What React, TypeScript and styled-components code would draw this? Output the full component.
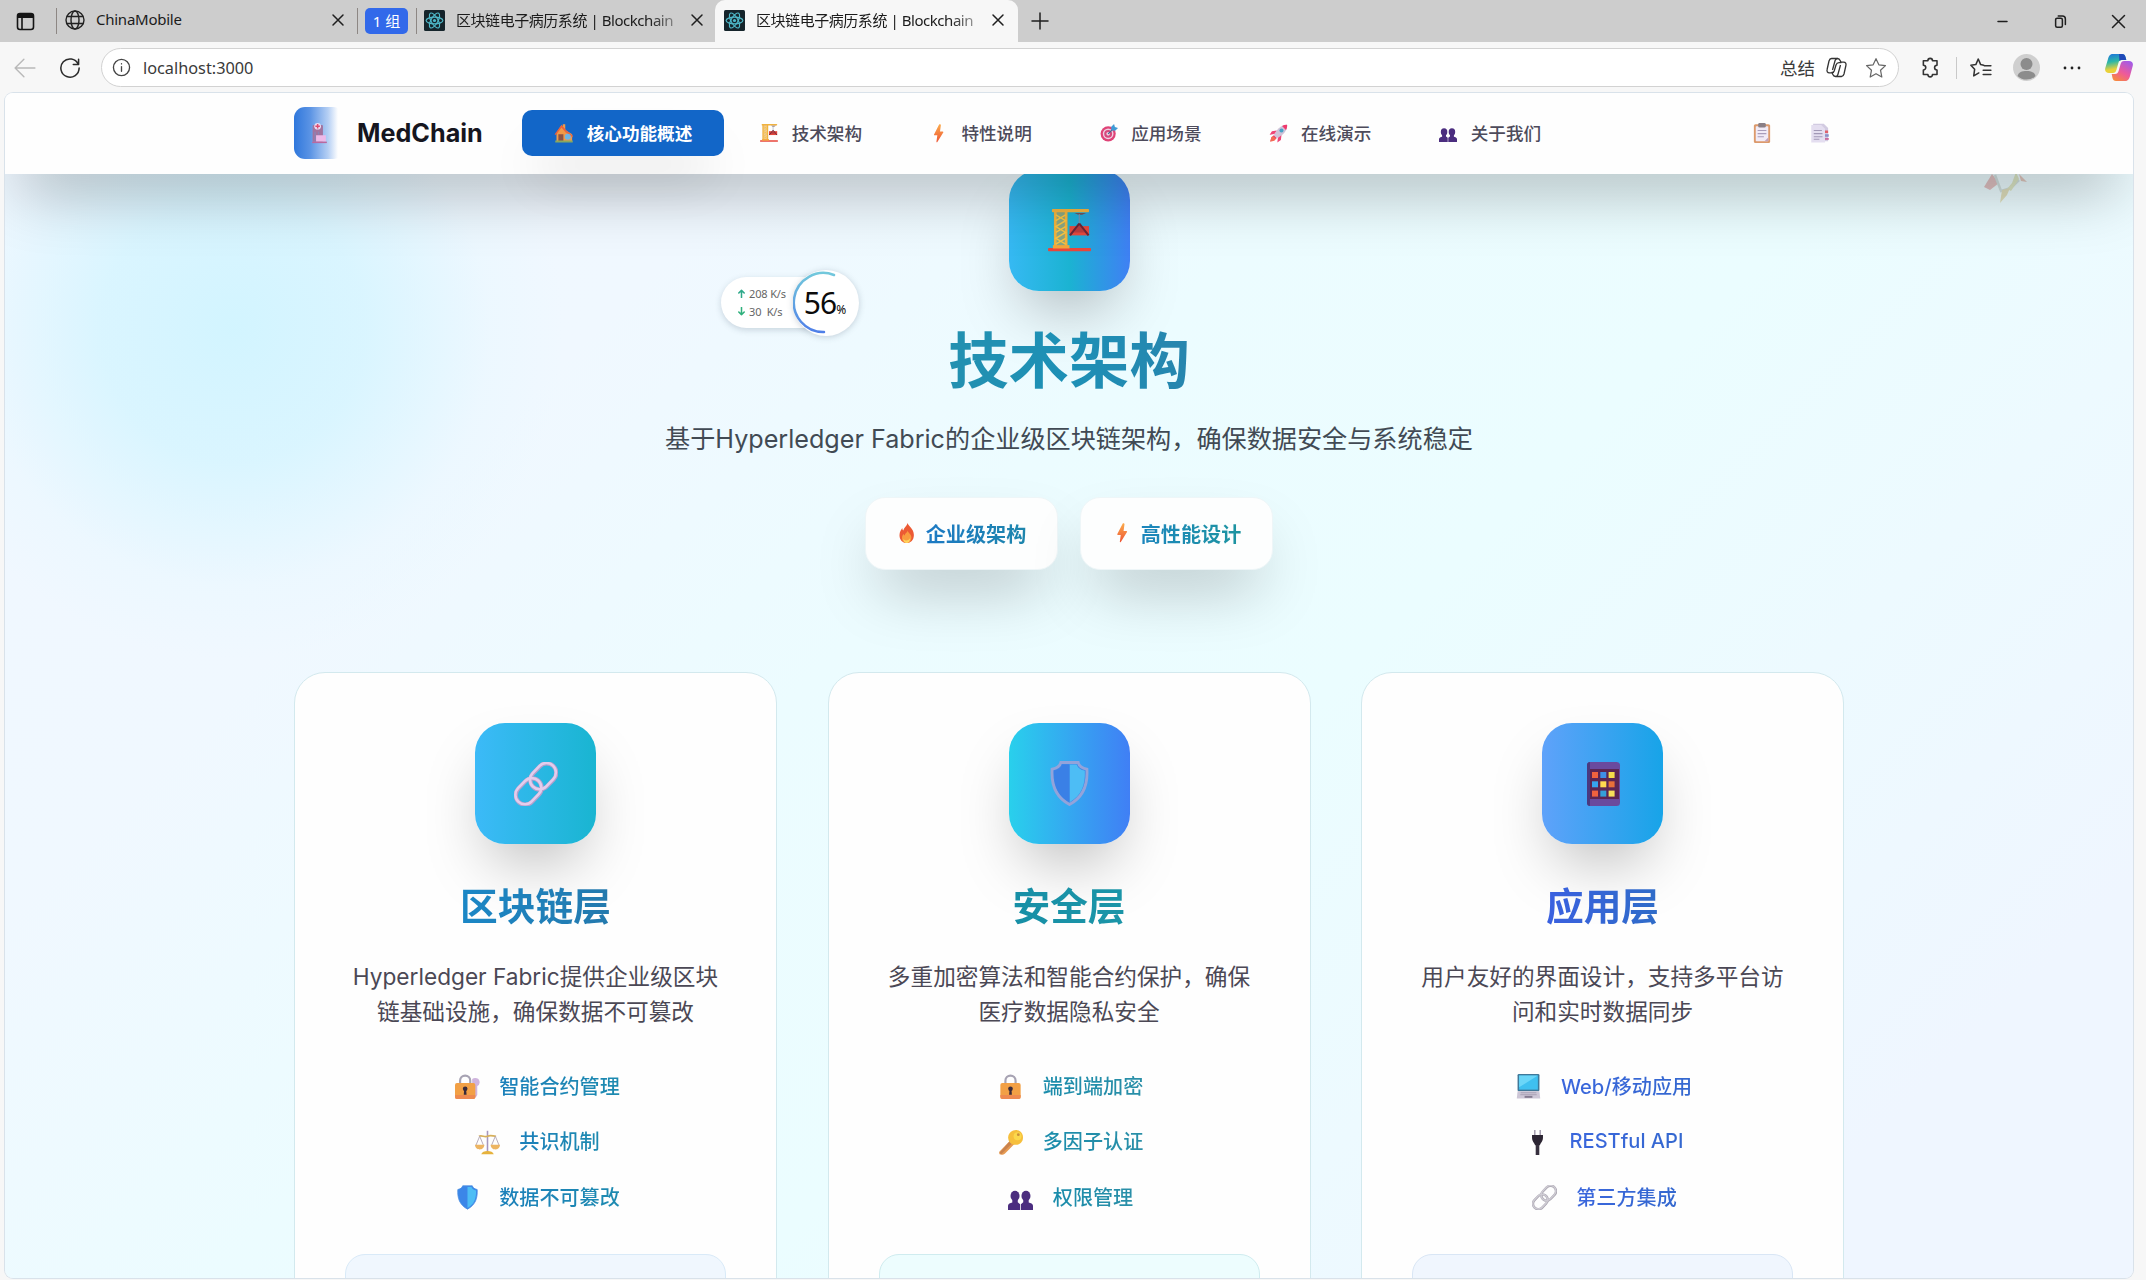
import React from 'react';
import styled, { createGlobalStyle } from 'styled-components';

const GlobalStyle = createGlobalStyle`
  * { box-sizing: border-box; }
  html, body { margin: 0; padding: 0; overflow: hidden; }
  body { font-family: Inter, "Noto Sans CJK SC", sans-serif; }
  svg { display: block; flex: none; }
`;

/* ---------- browser chrome ---------- */

const Browser = styled.div`
  width: 2146px;
  height: 1280px;
  display: flex;
  flex-direction: column;
  background: #f7f7f7;
  position: relative;
  overflow: hidden;
  font-family: Inter, "Noto Sans CJK SC", sans-serif;
`;

const TabStrip = styled.div`
  height: 42px;
  flex: none;
  display: flex;
  align-items: center;
  background: #cdcdcd;
  font-family: "Noto Sans", "Noto Sans CJK SC", sans-serif;
  font-size: 15px;
  color: #1b1b1b;
`;

const TabMenu = styled.div`
  width: 56px;
  padding-left: 16px;
`;

const Divider = styled.i<{ $h?: number; $c?: string }>`
  flex: none;
  width: 1px;
  height: ${(p) => p.$h ?? 26}px;
  background: ${(p) => p.$c ?? '#8d8784'};
`;

const Tab = styled.div<{ $w: number; $pl: number; $pr: number; $active?: boolean }>`
  width: ${(p) => p.$w}px;
  height: 42px;
  flex: none;
  display: flex;
  align-items: center;
  padding: 0 ${(p) => p.$pr}px 2px ${(p) => p.$pl}px;
  background: ${(p) => (p.$active ? '#f7f7f7' : 'transparent')};
  border-radius: 10px 10px 0 0;
`;

const TabTitle = styled.span<{ $fade?: boolean }>`
  flex: 1;
  margin: 0 4px 0 11px;
  padding-bottom: 2px;
  white-space: nowrap;
  letter-spacing: ${(p) => (p.$fade ? '-0.45px' : '-0.25px')};
  ${(p) => p.$fade && 'mask-image: linear-gradient(90deg, #000 85%, rgba(0, 0, 0, 0.25) 99%);'}
`;

const GroupBadge = styled.span`
  width: 43px;
  height: 26px;
  margin: 0 8px 0 7px;
  border-radius: 5px;
  background: #3269ea;
  color: #fff;
  display: flex;
  align-items: center;
  justify-content: center;
  padding-bottom: 1px;
  white-space: pre;
`;

const NewTab = styled.div`
  margin-left: 12px;
`;

const WindowControls = styled.div`
  margin-left: auto;
  margin-right: 20px;
  display: flex;
  gap: 43px;
`;

const Toolbar = styled.div`
  height: 51px;
  flex: none;
  display: flex;
  align-items: center;
  padding: 0 12px 0 14px;
  font-family: "Noto Sans", "Noto Sans CJK SC", sans-serif;
`;

const NavButtons = styled.div`
  display: flex;
  gap: 23px;
  width: 87px;
`;

const AddressBar = styled.div`
  width: 1798px;
  height: 39px;
  border: 1px solid #d2d2d2;
  border-radius: 20px;
  background: #fff;
  display: flex;
  align-items: center;
  padding: 0 11px 0 10px;
  font-size: 16.3px;
  color: #3a3a3a;
`;

const Url = styled.span`
  flex: 1;
  margin-left: 12px;
`;

const Summarize = styled.span`
  font-size: 17.5px;
  margin-right: 11px;
`;

const AddressTools = styled.div`
  display: flex;
  align-items: center;
  gap: 18px;
`;

const ToolbarActions = styled.div`
  flex: 1;
  display: grid;
  grid-template-columns: 36px 14px 43px 50px 42px 28px;
  align-items: center;
  padding-left: 21px;
`;

/* ---------- page ---------- */

const Viewport = styled.div`
  flex: 1;
  margin: 0 13px 2px 5px;
  overflow: hidden;
  border-radius: 8px;
  box-shadow: 0 0 0 1px #d9e2ea;
  background:
    radial-gradient(circle 330px at 228px 236px, rgba(205, 244, 255, 0.85) 0%, rgba(208, 244, 255, 0.7) 40%, rgba(226, 247, 255, 0.25) 78%, rgba(236, 249, 255, 0) 100%),
    linear-gradient(135deg, #f0f7ff 0%, #f0f8ff 25%, #ecfcff 42%, #ebfdff 58%, #edfaff 72%, #eff6ff 88%, #eff6ff 100%);
`;

const Header = styled.header`
  position: relative;
  z-index: 2;
  height: 81px;
  background: #fefefe;
  box-shadow: 0 31px 63px -15px rgba(0, 0, 0, 0.29);
`;

const Container = styled.div`
  width: 1550px;
  margin: 0 auto;
`;

const HeaderRow = styled(Container)`
  height: 80px;
  display: flex;
  align-items: center;
`;

const LogoBox = styled.div`
  width: 50px;
  height: 52px;
  border-radius: 11px;
  display: flex;
  align-items: center;
  justify-content: center;
  background: linear-gradient(90deg, #2f77dc 0%, #5a93e4 32%, #b5cff4 68%, rgba(255, 255, 255, 0) 88%);
`;

const Brand = styled.span`
  width: 165px;
  padding-left: 13px;
  font-size: 25.2px;
  font-weight: 700;
  color: #16161f;
`;

const Nav = styled.nav`
  display: flex;
  gap: 3px;
  margin-left: 13px;
`;

const NavItem = styled.a<{ $active?: boolean }>`
  height: 46px;
  display: flex;
  align-items: center;
  gap: 12px;
  padding: 0 31.7px 2px;
  border-radius: 10px;
  font-size: 17.6px;
  font-weight: ${(p) => (p.$active ? 600 : 500)};
  color: ${(p) => (p.$active ? '#fff' : '#4d4b5b')};
  background: ${(p) => (p.$active ? '#1266c8' : 'transparent')};
  box-shadow: ${(p) => (p.$active ? '0 31px 50px -15px rgba(0, 0, 0, 0.18)' : 'none')};
  white-space: nowrap;
`;

const NavIcon = styled.span`
  width: 21px;
  padding-top: 2px;
  display: flex;
  justify-content: center;
`;

const HeaderTools = styled.div`
  margin-left: auto;
  display: flex;
  gap: 10px;
`;

const ToolButton = styled.div`
  width: 48px;
  height: 48px;
  display: flex;
  align-items: center;
  justify-content: center;
`;

const Hero = styled.section`
  display: flex;
  flex-direction: column;
  align-items: center;
  margin-top: -4px;
`;

const IconTile = styled.div<{ $bg: string }>`
  width: 121px;
  height: 121px;
  flex: none;
  border-radius: 30px;
  display: flex;
  align-items: center;
  justify-content: center;
  background: ${(p) => p.$bg};
  box-shadow: 0 31px 63px -15px rgba(0, 0, 0, 0.27);
`;

const HeroTitle = styled.h2`
  margin: 32px 0 0;
  font-size: 60.4px;
  line-height: 76px;
  font-weight: 700;
  color: transparent;
  background: linear-gradient(90deg, #2390b0, #1d90b6 50%, #2785ae);
  background-clip: text;
  -webkit-background-clip: text;
`;

const HeroText = styled.p`
  margin: 20px 0 0;
  font-size: 25.15px;
  line-height: 40px;
  color: #414a54;
  white-space: nowrap;
`;

const Badges = styled.div`
  display: flex;
  gap: 22px;
  margin-top: 38px;
`;

const Badge = styled.div`
  width: 193px;
  height: 73px;
  padding-bottom: 1px;
  border-radius: 20px;
  border: 1px solid #eef6f8;
  background: #fdfefe;
  box-shadow: 0 31px 63px -15px rgba(0, 0, 0, 0.26);
  display: flex;
  align-items: center;
  justify-content: center;
  gap: 9px;
  font-size: 20.1px;
  font-weight: 600;
`;

const Gradient = styled.span<{ $g: string }>`
  color: transparent;
  background: linear-gradient(90deg, ${(p) => p.$g});
  background-clip: text;
  -webkit-background-clip: text;
`;

const Cards = styled.div`
  display: grid;
  grid-template-columns: repeat(3, 483px);
  justify-content: space-between;
  margin-top: 102px;
`;

const Card = styled.article`
  height: 720px;
  padding: 50px 50px;
  border: 1px solid #d3e9ee;
  border-radius: 31px;
  background: #fefefe;
  display: flex;
  flex-direction: column;
  align-items: center;
`;

const CardTitle = styled.h3`
  margin: 37px 0 0;
  font-size: 37.7px;
  line-height: 50px;
  font-weight: 700;
`;

const CardText = styled.p`
  margin: 28px 0 39px;
  font-size: 22.65px;
  line-height: 35.2px;
  color: #4b4855;
  text-align: center;
  white-space: nowrap;
`;

const Feature = styled.div`
  height: 34px;
  flex: none;
  margin-bottom: 21.3px;
  display: flex;
  align-items: center;
  gap: 16px;
  font-size: 20.1px;
  font-weight: 500;
`;

const FeatureIcon = styled.span`
  width: 32px;
  padding-top: 3px;
  display: flex;
  justify-content: center;
`;

const CardPanel = styled.div<{ $bg: string; $line: string }>`
  align-self: stretch;
  flex: none;
  height: 120px;
  margin-top: 20px;
  border: 1px solid ${(p) => p.$line};
  border-radius: 20px;
  background: ${(p) => p.$bg};
`;

/* ---------- floating decorations ---------- */

const Drifter = styled.div`
  position: absolute;
  left: 1983px;
  top: 162px;
  opacity: 0.4;
`;

const Monitor = styled.div`
  position: absolute;
  z-index: 3;
  left: 721px;
  top: 269px;
  width: 139px;
  height: 67px;
  display: flex;
  align-items: center;
  font-family: "Noto Sans", sans-serif;
`;

const Speeds = styled.div`
  width: 90px;
  height: 51px;
  padding-left: 16px;
  border-radius: 26px 0 0 26px;
  background: #fff;
  box-shadow: 0 2px 6px rgba(60, 80, 100, 0.22);
  display: flex;
  flex-direction: column;
  justify-content: center;
  gap: 2px;
  color: #666;
  font-size: 11px;
  letter-spacing: -0.15px;
  line-height: 16px;
`;

const Speed = styled.span`
  display: flex;
  align-items: center;
  gap: 3px;
  white-space: pre;
`;

const Gauge = styled.div`
  position: relative;
  width: 66px;
  height: 66px;
  flex: none;
  margin-left: -18px;
  border-radius: 50%;
  background: #fff;
  box-shadow: 0 1px 6px rgba(60, 80, 100, 0.25);
  display: flex;
  align-items: baseline;
  justify-content: center;
  padding-right: 3px;
  line-height: 65px;
  font-size: 30px;
  letter-spacing: -1px;
  color: #0b0b0b;
`;

const GaugeRing = styled.svg`
  position: absolute;
  inset: 0;
`;

const Percent = styled.small`
  font-size: 12px;
`;

/* ---------- icons ---------- */

type Size = { s: number };

const Crane = ({ s }: Size) => (
  <svg width={s} height={s} viewBox="0 0 44 44" fill="none">
    <rect x="0" y="40" width="44" height="3.2" rx="1" fill="#e8473c" />
    <rect x="6" y="2" width="14" height="38" fill="#e39a3c" opacity=".55" />
    <path d="M7.5 2v38M18.5 2v38" stroke="#f2b33c" strokeWidth="2.6" />
    <path d="M8 6l10 6-10 6 10 6-10 6 10 6M8 12l10-6M8 24l10-6M8 36l10-6" stroke="#f6c443" strokeWidth="1.5" />
    <rect x="4" y="0" width="38" height="3.4" rx="1" fill="#f0b23f" />
    <rect x="5" y="37" width="17" height="3.4" fill="#f5a63a" />
    <path d="M27 4h12l-4 2h-4z" fill="#70535b" />
    <path d="M32 5v10" stroke="#7e8fa8" strokeWidth="1.2" />
    <rect x="22" y="17.5" width="20" height="9.5" fill="#e5483d" />
    <path d="M32 15l-9.5 12M32 15l9.5 12" stroke="#6a2638" strokeWidth="2.2" />
    <path d="M32 16l6 8H26z" fill="#8e3040" opacity=".5" />
  </svg>
);

const Hospital = ({ s }: Size) => (
  <svg width={s} height={s * 1.35} viewBox="0 0 16 22">
    <rect x="1.500" y="3" width="10.500" height="17" rx="1" fill="#a2739f" />
    <path d="M4 10v9M7.500 10v3" stroke="#8a83b5" strokeWidth="1.400" />
    <rect x="5" y="13.500" width="10" height="6.500" fill="#edb9e8" />
    <circle cx="6.600" cy="4.300" r="3.400" fill="#eadcf2" />
    <path d="M6.600 2v4.600M4.300 4.300h4.600" stroke="#de4a70" strokeWidth="1.500" />
    <rect x="1" y="20" width="15" height="1.500" fill="#b9689f" />
  </svg>
);

const House = ({ s }: Size) => (
  <svg width={s} height={s} viewBox="0 0 32 32">
    <path d="M4 15L12 3l2 3V2h4v9l11 7v11H4z" fill="#f09a48" />
    <path d="M1 18L12 3l8 9-2 2-6-7-9 12z" fill="#e8603f" />
    <path d="M17 14l3-2 10 8v3l-8-6z" fill="#e9663e" />
    <rect x="7" y="18" width="8" height="11" fill="#8b5345" />
    <circle cx="22" cy="22" r="4.800" fill="#6db6e6" />
    <path d="M2 28h28v3H2z" fill="#88a860" />
  </svg>
);

const Bolt = ({ s }: Size) => (
  <svg width={s} height={s} viewBox="0 0 32 32">
    <defs>
      <linearGradient id="bolt" x1="0" y1="0" x2="0" y2="1">
        <stop offset="0" stopColor="#fbac4c" />
        <stop offset="1" stopColor="#ee5535" />
      </linearGradient>
    </defs>
    <path d="M17 1L8.500 17.500c-.4.800 0 1.500 1 1.500h4.500L12.500 30c-.1 1 1 1.300 1.600.4L24 14.300c.5-.8 0-1.500-1-1.500h-4.500L20 2c.2-1.600-2.200-2.500-3-1z" fill="url(#bolt)" />
  </svg>
);

const Target = ({ s }: Size) => (
  <svg width={s} height={s} viewBox="0 0 32 32" fill="none">
    <circle cx="14.500" cy="17.500" r="13.500" fill="#df4377" />
    <circle cx="14.500" cy="17.500" r="9.500" fill="#efd0e2" />
    <circle cx="14.500" cy="17.500" r="7" fill="#d6487c" />
    <circle cx="14.500" cy="17.500" r="3.200" fill="#efd0e2" />
    <path d="M14.500 17.500L25 7" stroke="#39698f" strokeWidth="2" />
    <path d="M20 11V5l5-5 1.500 5.500L32 7l-5 5z" fill="#3f9bd6" />
  </svg>
);

const Rocket = ({ s }: Size) => (
  <svg width={s} height={s} viewBox="0 0 32 32">
    <path d="M30.500 1.500C24 1 17 5 12 12l-4 7 5 5 7-4c7-5 11-12 10.500-18.500z" fill="#cfc3d8" />
    <path d="M30.500 1.500c-3-.3-6 .5-8.500 2l6.500 6.500c1.500-2.500 2.300-5.500 2-8.500z" fill="#f0396d" />
    <path d="M13 11L5 12l-4 6 8-1zM21 19l-1 8-6 4 1-8z" fill="#ee4577" />
    <path d="M8 19l5 5-5 3-3-.5L2 30l2-7z" fill="#e62f66" />
    <path d="M2 30l2-8 3-2 5 5-3 3z" fill="#f46a55" />
    <circle cx="21" cy="11" r="3.400" fill="#4aa3c8" />
  </svg>
);

const Busts = ({ s }: Size) => (
  <svg width={s} height={s} viewBox="0 0 32 32" fill="#4b2d7f">
    <ellipse cx="9" cy="14" rx="5.800" ry="6.500" />
    <path d="M5.500 18h7v4l3 2.500V32H0v-5.500c0-2 3-3.500 5.500-4z" />
    <ellipse cx="23" cy="14" rx="5.800" ry="6.500" />
    <path d="M19.500 18h7v4.500c2.500.5 5.500 2 5.500 4V32H16.500v-7.500l3-2.500z" />
  </svg>
);

const Clipboard = ({ s }: Size) => (
  <svg width={s} height={s} viewBox="0 0 32 32">
    <rect x="3" y="2" width="26" height="30" rx="2.500" fill="#dc9a6c" />
    <rect x="6" y="5" width="20" height="24" rx="1" fill="#f1ebf7" />
    <rect x="10" y="0" width="12" height="7" rx="2" fill="#8a7f86" />
    <path d="M9 12h14M9 17h14M9 22h10" stroke="#a99dbb" strokeWidth="1.800" />
    <path d="M20 29l6-6v6z" fill="#c3a2bd" />
  </svg>
);

const BookmarkTabs = ({ s }: Size) => (
  <svg width={s} height={s} viewBox="0 0 32 32">
    <path d="M5 1h17l7 7v21H8V5H5z" fill="#d2cbe1" />
    <path d="M2 3h16l6 6v22H2z" fill="#e4def0" />
    <path d="M6 12h13M6 17h14M6 22h14M6 26h9" stroke="#a198b6" strokeWidth="1.700" />
    <rect x="24" y="12" width="5" height="4" fill="#e0606a" />
    <rect x="24" y="18" width="6" height="4" fill="#8a90c8" />
    <rect x="24" y="24" width="6" height="3" fill="#c86b9f" />
  </svg>
);

const Fire = ({ s }: Size) => (
  <svg width={s} height={s} viewBox="0 0 32 32">
    <path d="M17 0c1 5 10 9 10 19 0 8-5 13-11.500 13S4 27 4 19.500C4 14 7 10 8.500 8c0 2 .5 3 1.500 4C11 7 16 5 17 0z" fill="#ec5a34" />
    <path d="M17 12c1 4 6 6 6 11 0 5-3.500 9-7.500 9S8 28.500 8 24c0-3 1-5 2.500-6.500.5 1.500 1 2 2 2.500 0-4 4-4 4.500-8z" fill="#f99c3f" />
    <path d="M10 25c2 4 9 4 11-1 0 5-2.500 8-5.500 8S10 29 10 25z" fill="#ffd45e" />
  </svg>
);

const Link = ({ s, light }: Size & { light?: boolean }) => (
  <svg width={s} height={s} viewBox="0 0 44 44" fill="none">
    <g transform="rotate(-46 22 22)" stroke={light ? '#b59fcc' : '#a5a1ac'} strokeWidth="4.200">
      <rect x="-3" y="12.500" width="29" height="19" rx="9.500" />
      <rect x="18" y="12.500" width="29" height="19" rx="9.500" />
    </g>
    <g transform="rotate(-46 22 22)" stroke={light ? '#e3cdec' : '#cfccd4'} strokeWidth="2.600">
      <rect x="-3" y="12" width="29" height="19" rx="9.500" />
      <rect x="18" y="12" width="29" height="19" rx="9.500" />
    </g>
  </svg>
);

const shieldPath = 'M13.500 1.500h17c.8 3 3.500 5.500 8.500 6.500 1 15-3 27-17 34.500C8 35 4 23 5 8c5-1 7.700-3.500 8.500-6.500z';

const Shield = ({ s, outlined }: Size & { outlined?: boolean }) => (
  <svg width={s} height={s} viewBox="0 0 44 44">
    <path d={shieldPath} fill="#3b86e8" stroke={outlined ? '#93a3da' : '#4b8fe3'} strokeWidth={outlined ? 2.8 : 1.5} />
    <path d="M22 3.500h7c1 3 4 5.500 8 6 .5 14-3 24-15 31z" fill="#4dbdf5" />
    {outlined && <path d="M22 4h-7c-1 3-4 5-8 5.500C6.500 23 10 34 22 40z" fill="#3a80e6" />}
  </svg>
);

const Phone = ({ s }: Size) => {
  const colors = ['#f0623e', '#3f8fe8', '#f6dc4a', '#35a3f0', '#ffd950', '#e8703a', '#f0623e', '#35a0d8', '#f6e05a'];
  return (
    <svg width={s} height={s} viewBox="0 0 44 44">
      <rect x="6" y="0" width="33" height="44" rx="3.500" fill="#6a4a9e" />
      <rect x="8" y="7" width="30" height="30" fill="#5c2553" />
      <path d="M6 3a3 3 0 013-3v44a3 3 0 01-3-3z" fill="#4a3a80" />
      {colors.map((c, i) => (
        <rect key={i} x={11 + (i % 3) * 8.3} y={10 + Math.floor(i / 3) * 9.3} width="6" height="6" fill={c} />
      ))}
    </svg>
  );
};

const Lock = ({ s, withKey }: Size & { withKey?: boolean }) => (
  <svg width={s} height={s} viewBox="0 0 32 32" fill="none">
    {withKey && <path d="M26 5a5.500 5.500 0 012.500 10.400V27l-2 3H22V6.500A5.500 5.500 0 0126 5z" fill="#cfb4dd" />}
    <g transform={withKey ? 'translate(-3 0)' : undefined}>
      <path d="M9.500 14V8.500a6.500 6.500 0 0113 0V14" stroke="#a7a3b3" strokeWidth="2.800" />
      <rect x="3" y="11.500" width="26" height="20.500" rx="2.500" fill="#f2a045" />
      <path d="M3 27h26v2.500a2.500 2.500 0 01-2.500 2.500h-21A2.500 2.500 0 013 29.500z" fill="#ee8a50" />
      <circle cx="16" cy="19" r="3" fill="#3a2a3a" />
      <path d="M14.800 19.500h2.400l.6 7h-3.600z" fill="#3a2a3a" />
    </g>
  </svg>
);

const Scales = ({ s }: Size) => (
  <svg width={s} height={s} viewBox="0 0 32 32" fill="none">
    <path d="M16 1v27" stroke="#a596bd" strokeWidth="2" />
    <path d="M5 8c4-2 7 2 11 0s7 0 11 0" stroke="#d7b05a" strokeWidth="2" />
    <path d="M6 8L1 20M6 8l5 12M26 8l-5 12M26 8l5 12" stroke="#b3a7b5" strokeWidth="1.200" />
    <path d="M0 19h12c0 4-3 6-6 6s-6-2-6-6zM20 19h12c0 4-3 6-6 6s-6-2-6-6z" fill="#edb562" />
    <path d="M8 31c1-3 4-4 8-4s7 1 8 4z" fill="#e6b23c" />
  </svg>
);

const Key = ({ s }: Size) => (
  <svg width={s} height={s} viewBox="0 0 32 32">
    <path d="M16 13l5 5L9 30c-1.500 1.500-4 2-6 1.500-1.500-.5-2-2.500-1-4z" fill="#e69a52" />
    <path d="M16 13l3 3L4 31l-2-2z" fill="#c9824d" />
    <path d="M23 0c5 0 9 4 9 9.500S28 19 22.500 19 13 15 13 9.500 18 0 23 0z" fill="#f6bf3c" />
    <circle cx="25" cy="8" r="5" fill="#fbd84c" />
    <circle cx="26" cy="6" r="1.800" fill="#c98f3a" />
  </svg>
);

const Laptop = ({ s }: Size) => (
  <svg width={s} height={s} viewBox="0 0 32 32">
    <rect x="2" y="0" width="28" height="22" rx="1.500" fill="#3f7899" />
    <rect x="4" y="2" width="24" height="18" fill="#3fc0f0" />
    <path d="M4 2h24L4 17z" fill="#6bd6f8" />
    <path d="M2 22h28l1 9.500H1z" fill="#cdc6d6" />
    <path d="M6 24h20M5.500 26.500h21" stroke="#a79fb3" strokeWidth="1.200" />
    <rect x="11" y="28" width="10" height="2.500" fill="#857b91" />
  </svg>
);

const Plug = ({ s }: Size) => (
  <svg width={s} height={s} viewBox="0 0 32 32">
    <path d="M12.500 0v7M19.500 0v7" stroke="#a69fb0" strokeWidth="2" />
    <path d="M9 6.500h14v3c0 5-2.500 6-4 10h-6c-1.500-4-4-5-4-10z" fill="#2c2533" />
    <rect x="13.700" y="19" width="4.600" height="13" fill="#37303e" />
  </svg>
);

const ReactLogo = () => (
  <svg width="21" height="21" viewBox="0 0 20 20" fill="none">
    <rect width="20" height="20" rx="1.500" fill="#15242b" />
    <g stroke="#4fb9c9" strokeWidth="1.100">
      <ellipse cx="10" cy="10" rx="8" ry="3.200" />
      <ellipse cx="10" cy="10" rx="8" ry="3.200" transform="rotate(60 10 10)" />
      <ellipse cx="10" cy="10" rx="8" ry="3.200" transform="rotate(120 10 10)" />
    </g>
    <circle cx="10" cy="10" r="1.500" fill="#4fb9c9" />
  </svg>
);

const Line = ({ d, w = 20, sw = 1.5, c = '#1f1f1f' }: { d: string; w?: number; sw?: number; c?: string }) => (
  <svg width={w} height={w} viewBox="0 0 20 20" fill="none" stroke={c} strokeWidth={sw} strokeLinecap="round" strokeLinejoin="round">
    <path d={d} />
  </svg>
);

const closePath = 'M5 5l10 10M15 5L5 15';

const CopilotOutline = () => (
  <svg width="21" height="21" viewBox="0 0 21 21" fill="none" stroke="#333" strokeWidth="1.300" strokeLinejoin="round">
    <path d="M5.500 1.500h6c1.500 0 2.200.7 2.800 2.200l.7 2H13c-1.600 0-2.500.8-3 2.300l-1.800 6c-.4 1.200-1.200 1.800-2.700 1.800H3.300C1.500 15.800.6 14.500 1.100 12.500L3 4C3.500 2.300 4.100 1.500 5.500 1.500z" />
    <path d="M15.500 19.500h-6c-1.500 0-2.200-.7-2.800-2.200l-.7-2h2M11.500 1.500c-1.300 0-2 .6-2.400 2L6.500 13M9.500 19.500c1.300 0 2-.6 2.400-2l2.600-9.500M14.500 5.200h3.200c1.800 0 2.700 1.300 2.200 3.300L18 17c-.5 1.700-1.100 2.500-2.500 2.500" />
  </svg>
);

const CopilotLogo = () => (
  <svg width="28" height="27" viewBox="0 0 28 27">
    <defs>
      <linearGradient id="copA" x1="0" y1="0" x2="0.2" y2="1">
        <stop offset="0" stopColor="#1c6fe0" />
        <stop offset="0.450" stopColor="#2bb7a8" />
        <stop offset="0.850" stopColor="#e9d13a" />
      </linearGradient>
      <linearGradient id="copB" x1="0.800" y1="0" x2="0.200" y2="1">
        <stop offset="0" stopColor="#a25be8" />
        <stop offset="0.550" stopColor="#ee5a9a" />
        <stop offset="1" stopColor="#f78a3c" />
      </linearGradient>
    </defs>
    <path d="M8 0h9c2 0 3 1 3.500 3l.8 3H17c-2 0-3 .8-3.600 3l-2 7c-.6 2-1.500 3-3.600 3H4c-3 0-4.500-2-3.700-5L3 5c1-3.500 2-5 5-5z" fill="url(#copA)" />
    <path d="M20 27h-9c-2 0-3-1-3.500-3l-.8-4H10c2 0 3-1 3.600-3l2-7c.6-2 1.500-3 3.600-3H24c3 0 4.500 2 3.700 5L25 22c-1 3.500-2 5-5 5z" fill="url(#copB)" />
    <path d="M14 0h3c2 0 3 1 3.500 3l.8 3H17c-1 0-2 .3-2.600 1z" fill="#1f49b8" />
  </svg>
);

/* ---------- content ---------- */

const NAV = [
  { label: '核心功能概述', icon: <House s={20} />, active: true },
  { label: '技术架构', icon: <Crane s={18} /> },
  { label: '特性说明', icon: <Bolt s={19} /> },
  { label: '应用场景', icon: <Target s={18} /> },
  { label: '在线演示', icon: <Rocket s={19} /> },
  { label: '关于我们', icon: <Busts s={18} /> },
];

const CARDS = [
  {
    title: '区块链层',
    text: ['Hyperledger Fabric提供企业级区块', '链基础设施，确保数据不可篡改'],
    tile: 'linear-gradient(90deg, #3cbaf8, #19b5d1)',
    icon: <Link s={44} light />,
    ink: '#1b87c6, #2479ad',
    soft: '#1b80ba, #1d8ab0',
    panel: '#f0f7fe',
    line: '#d9eaf8',
    features: [
      { icon: <Lock s={25} withKey />, label: '智能合约管理' },
      { icon: <Scales s={25} />, label: '共识机制' },
      { icon: <Shield s={25} />, label: '数据不可篡改' },
    ],
  },
  {
    title: '安全层',
    text: ['多重加密算法和智能合约保护，确保', '医疗数据隐私安全'],
    tile: 'linear-gradient(90deg, #29d0ec, #407ff5)',
    icon: <Shield s={45} outlined />,
    ink: '#178fa6, #1b95a8',
    soft: '#1a8cab, #2a8fa8',
    panel: '#edfdfe',
    line: '#cfecef',
    features: [
      { icon: <Lock s={25} />, label: '端到端加密' },
      { icon: <Key s={25} />, label: '多因子认证' },
      { icon: <Busts s={25} />, label: '权限管理' },
    ],
  },
  {
    title: '应用层',
    text: ['用户友好的界面设计，支持多平台访', '问和实时数据同步'],
    tile: 'linear-gradient(90deg, #5fa2fa, #17a4e8)',
    icon: <Phone s={44} />,
    ink: '#3a60e0, #2f6cc8',
    soft: '#3a66dd, #3468cf',
    panel: '#f0f6fe',
    line: '#d9e6f5',
    features: [
      { icon: <Laptop s={25} />, label: 'Web/移动应用' },
      { icon: <Plug s={25} />, label: 'RESTful API' },
      { icon: <Link s={25} />, label: '第三方集成' },
    ],
  },
];

const PAGE_TITLE = '区块链电子病历系统 | Blockchain';

export default function App() {
  return (
    <>
      <GlobalStyle />
      <Browser>
        <TabStrip>
          <TabMenu>
            <svg width="19" height="19" viewBox="0 0 19 19" fill="none" stroke="#151515" strokeWidth="1.600">
              <rect x="1.500" y="1.500" width="16" height="16" rx="2.500" />
              <path d="M1.500 4h16" strokeWidth="4" />
              <path d="M6 4v13" />
            </svg>
          </TabMenu>
          <Divider />
          <Tab $w={300} $pl={8} $pr={9}>
            <svg width="20" height="20" viewBox="0 0 20 20" fill="none" stroke="#222" strokeWidth="1.400">
              <circle cx="10" cy="10" r="9" />
              <ellipse cx="10" cy="10" rx="4" ry="9" />
              <path d="M1.800 6.500h16.400M1.800 13.500h16.400" />
            </svg>
            <TabTitle>ChinaMobile</TabTitle>
            <Line d={closePath} w={20} />
          </Tab>
          <Divider />
          <GroupBadge>1 组</GroupBadge>
          <Divider />
          <Tab $w={298} $pl={7} $pr={8}>
            <ReactLogo />
            <TabTitle $fade>{PAGE_TITLE}</TabTitle>
            <Line d={closePath} w={20} />
          </Tab>
          <Tab $w={303} $pl={9} $pr={10} $active>
            <ReactLogo />
            <TabTitle $fade>{PAGE_TITLE}</TabTitle>
            <Line d={closePath} w={20} />
          </Tab>
          <NewTab>
            <Line d="M10 2v16M2 10h16" w={20} />
          </NewTab>
          <WindowControls>
            <Line d="M4 10h12" w={15} sw={2} />
            <Line d="M3.500 7.500a2 2 0 012-2h5a2 2 0 012 2v8a2 2 0 01-2 2h-5a2 2 0 01-2-2zM7 2.500h5.500a4 4 0 014 4V14" w={15} sw={2} />
            <Line d="M2 2l16 16M18 2L2 18" w={15} sw={2} />
          </WindowControls>
        </TabStrip>

        <Toolbar>
          <NavButtons>
            <Line d="M19 10H1M9 2L1 10l8 8" w={22} sw={1.3} c="#b9b9b9" />
            <Line d="M17.500 6.500A8.300 8.300 0 1018.300 10M17.800 2v4.800h-4.800" w={22} sw={1.4} c="#2b2b2b" />
          </NavButtons>
          <AddressBar>
            <Line d="M10 1.500a8.500 8.500 0 100 17 8.500 8.500 0 000-17zM10 9v5M10 6v.2" w={19} sw={1.4} c="#444" />
            <Url>localhost:3000</Url>
            <Summarize>总结</Summarize>
            <AddressTools>
              <CopilotOutline />
              <Line d="M10 1.500l2.600 5.600 6 .7-4.500 4.200 1.200 6.200L10 15.200l-5.300 3 1.200-6.200L1.400 7.800l6-.7z" w={22} sw={1.1} c="#666" />
            </AddressTools>
          </AddressBar>
          <ToolbarActions>
            <Line d="M7.500 3.500a2.200 2.200 0 014.400 0h4.300v4.300a2.300 2.300 0 000 4.600v4.300h-4.300a2.200 2.200 0 01-4.400 0H3.200v-4.300a2.300 2.300 0 000-4.600V3.500z" w={21} sw={1.5} c="#333" />
            <Divider $h={22} $c="#c9c9c9" />
            <Line d="M12.500 7.500L9.700 6.900 7.500 1.800 5.300 6.900.8 7.500l3.400 3.700-.8 6L8 14.500M13 8h6M12 12h7M12 16h7" w={22} sw={1.4} c="#333" />
            <svg width="27" height="27" viewBox="0 0 27 27">
              <circle cx="13.500" cy="13.500" r="13.500" fill="#cfcfcf" />
              <circle cx="13.500" cy="10" r="6" fill="#8c8c8c" />
              <path d="M4.500 22c1-4 4.500-5 9-5s8 1 9 5a13 13 0 01-18 0z" fill="#8c8c8c" />
            </svg>
            <svg width="18" height="4" viewBox="0 0 18 4" fill="#222">
              <circle cx="2" cy="2" r="1.400" />
              <circle cx="9" cy="2" r="1.400" />
              <circle cx="16" cy="2" r="1.400" />
            </svg>
            <CopilotLogo />
          </ToolbarActions>
        </Toolbar>

        <Viewport>
          <Header>
            <HeaderRow>
              <LogoBox>
                <Hospital s={16} />
              </LogoBox>
              <Brand>MedChain</Brand>
              <Nav>
                {NAV.map((n) => (
                  <NavItem key={n.label} $active={n.active}>
                    <NavIcon>{n.icon}</NavIcon>
                    {n.label}
                  </NavItem>
                ))}
              </Nav>
              <HeaderTools>
                <ToolButton>
                  <Clipboard s={20} />
                </ToolButton>
                <ToolButton>
                  <BookmarkTabs s={20} />
                </ToolButton>
              </HeaderTools>
            </HeaderRow>
          </Header>

          <Container>
            <Hero>
              <IconTile $bg="linear-gradient(90deg, #36b9f3, #1bb3d2 50%, #3f80f4)">
                <Crane s={43} />
              </IconTile>
              <HeroTitle>技术架构</HeroTitle>
              <HeroText>基于Hyperledger Fabric的企业级区块链架构，确保数据安全与系统稳定</HeroText>
              <Badges>
                <Badge>
                  <Fire s={20} />
                  <Gradient $g="#1c79c4, #1d86ad">企业级架构</Gradient>
                </Badge>
                <Badge>
                  <Bolt s={20} />
                  <Gradient $g="#1c86bd, #1d94a0">高性能设计</Gradient>
                </Badge>
              </Badges>
            </Hero>

            <Cards>
              {CARDS.map((c) => (
                <Card key={c.title}>
                  <IconTile $bg={c.tile}>{c.icon}</IconTile>
                  <CardTitle>
                    <Gradient $g={c.ink}>{c.title}</Gradient>
                  </CardTitle>
                  <CardText>
                    {c.text[0]}
                    <br />
                    {c.text[1]}
                  </CardText>
                  {c.features.map((f) => (
                    <Feature key={f.label}>
                      <FeatureIcon>{f.icon}</FeatureIcon>
                      <Gradient $g={c.soft}>{f.label}</Gradient>
                    </Feature>
                  ))}
                  <CardPanel $bg={c.panel} $line={c.line} />
                </Card>
              ))}
            </Cards>
          </Container>
        </Viewport>

        <Drifter>
          <svg width="46" height="42" viewBox="0 0 46 42" fill="none">
            <path d="M1 25l8-13 7 9-9 7z" fill="#cf6a68" />
            <path d="M12 13l6 16 10-3 8-8" stroke="#a9b8b4" strokeWidth="2.500" />
            <path d="M33 10l3 7-8 12-4-2 5-6z" fill="#c5c873" />
            <path d="M36 12l8 8-6-1z" fill="#d07b62" />
            <path d="M17 41l2-13 8-2-3 7z" fill="#cdb35a" />
          </svg>
        </Drifter>

        <Monitor>
          <Speeds>
            <Speed>
              <Line d="M10 19V3M4 9l6-6 6 6" w={9} sw={3.4} c="#2fa98a" />
              208 K/s
            </Speed>
            <Speed>
              <Line d="M10 1v16M4 11l6 6 6-6" w={9} sw={3.4} c="#2fb07c" />
              30  K/s
            </Speed>
          </Speeds>
          <Gauge>
            <GaugeRing width="66" height="66" viewBox="0 0 66 66" fill="none">
              <defs>
                <linearGradient id="ring" x1="0" y1="0" x2="0" y2="1">
                  <stop offset="0" stopColor="#72c8dc" />
                  <stop offset="1" stopColor="#4f7fe8" />
                </linearGradient>
              </defs>
              <path d="M41 5A29.500 29.500 0 1031 62" stroke="url(#ring)" strokeWidth="2.500" strokeLinecap="round" />
            </GaugeRing>
            56<Percent>%</Percent>
          </Gauge>
        </Monitor>
      </Browser>
    </>
  );
}
